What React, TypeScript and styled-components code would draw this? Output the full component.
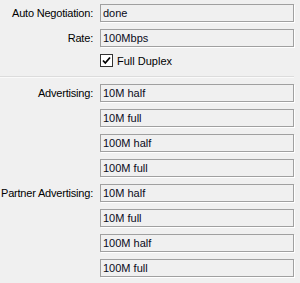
import React from 'react';
import styled, { createGlobalStyle } from 'styled-components';

const GlobalStyle = createGlobalStyle`
  html, body {
    margin: 0;
    padding: 0;
    background: #f0f0f0;
  }
  body {
    font-family: "Liberation Sans", Arial, sans-serif;
    font-size: 11px;
    color: #000;
  }
`;

const Panel = styled.div`
  width: 300px;
  height: 283px;
  padding-top: 4px;
  box-sizing: border-box;
  background: #f0f0f0;
`;

const Row = styled.div`
  display: flex;
  align-items: center;
  height: 18px;
  margin-bottom: 7px;
`;

const Label = styled.div`
  width: 100px;
  box-sizing: border-box;
  padding-right: 7px;
  text-align: right;
  white-space: nowrap;
  letter-spacing: -0.2px;
`;

const Field = styled.div`
  width: 194px;
  height: 18px;
  box-sizing: border-box;
  border: 1px solid #a0a0a0;
  box-shadow: 1px 1px 0 #ffffff;
  background: #f0f0f0;
  padding-left: 2px;
  line-height: 16px;
  color: #0a0a20;
  white-space: nowrap;
`;

const CheckRow = styled.div`
  display: flex;
  align-items: center;
  height: 13px;
  margin-bottom: 9px;
  padding-left: 100px;
`;

const CheckBox = styled.span`
  width: 13px;
  height: 13px;
  box-sizing: border-box;
  border: 1px solid #333;
  background: #fff;
  display: flex;
  align-items: center;
  justify-content: center;
  margin-right: 4px;
`;

const Separator = styled.div`
  width: 294px;
  height: 1px;
  background: #dcdcdc;
  border-bottom: 1px solid #fafafa;
  margin-bottom: 6px;
`;

const speeds = ['10M half', '10M full', '100M half', '100M full'];

const Group = ({ label }: { label: string }) => (
  <>
    {speeds.map((s, i) => (
      <Row key={s}>
        <Label>{i === 0 ? label : ''}</Label>
        <Field>{s}</Field>
      </Row>
    ))}
  </>
);

export default function App() {
  return (
    <>
      <GlobalStyle />
      <Panel>
        <Row>
          <Label>Auto Negotiation:</Label>
          <Field>done</Field>
        </Row>
        <Row>
          <Label>Rate:</Label>
          <Field>100Mbps</Field>
        </Row>
        <CheckRow>
          <CheckBox>
            <svg width="9" height="9" viewBox="0 0 9 9">
              <path d="M1 4.5 L3.3 7 L8 1.5" stroke="#000" strokeWidth="1.8" fill="none" />
            </svg>
          </CheckBox>
          Full Duplex
        </CheckRow>
        <Separator />
        <Group label="Advertising:" />
        <Group label="Partner Advertising:" />
      </Panel>
    </>
  );
}
